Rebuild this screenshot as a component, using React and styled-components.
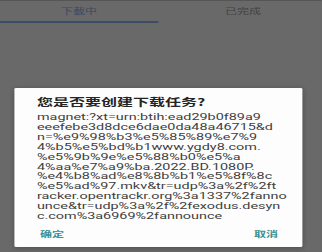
import React from "react"
import styled, { createGlobalStyle } from "styled-components"

// the capture is stretched sideways, so the whole screen is laid out narrow and widened once
const STRETCH = 1.6

const GlobalStyle = createGlobalStyle`
  html, body {
    margin: 0;
    padding: 0;
    width: 322px;
    height: 252px;
    overflow: hidden;
    background: #696969;
  }
`

const Screen = styled.div`
  width: ${322 / STRETCH}px;
  height: 252px;
  transform: scaleX(${STRETCH});
  transform-origin: 0 0;
  background: #696969;
  display: flex;
  flex-direction: column;
  font-family: Roboto, "Noto Sans CJK SC", sans-serif;
`

const TabBar = styled.div`
  display: flex;
  height: 23px;
  border-top: 1.5px solid #555;
  box-sizing: border-box;
`

const Tab = styled.div`
  position: relative;
  flex: 1;
  display: flex;
  justify-content: center;
  padding-top: 5px;
  padding-right: ${props => (props.active ? "4px" : "0")};
  font-family: "Noto Sans CJK SC", sans-serif;
  font-size: 7.5px;
  line-height: 10px;
  color: ${props => (props.active ? "#384961" : "#424242")};
  &::after {
    content: "";
    display: ${props => (props.active ? "block" : "none")};
    position: absolute;
    left: 0;
    right: 4px;
    bottom: 0;
    height: 1.6px;
    background: #3b4c66;
  }
`

const Dialog = styled.div`
  margin: 65px 0 0 9.4px;
  width: 180px;
  height: 159px;
  box-sizing: border-box;
  background: #fdfdfd;
  border-radius: 1px;
  box-shadow: 0 1px 4px rgba(0, 0, 0, 0.25);
  padding: 8px 0 0 13.7px;
  display: flex;
  flex-direction: column;
`

const Title = styled.div`
  font-family: "Noto Sans CJK SC", sans-serif;
  font-weight: 700;
  font-size: 10px;
  line-height: 12px;
  color: #242424;
`

const Body = styled.div`
  margin-top: 5px;
  font-family: Roboto, sans-serif;
  font-size: 9px;
  line-height: 9.9px;
  color: #404040;
  white-space: pre;
`

const Actions = styled.div`
  display: flex;
  justify-content: space-between;
  margin-top: 7px;
  padding: 0 15.6px 0 1.9px;
`

const Action = styled.div`
  font-family: "Noto Sans CJK SC", sans-serif;
  font-size: 7.5px;
  line-height: 10px;
  font-weight: 700;
  color: #3a9090;
`

const magnetLines = [
  "magnet:?xt=urn:btih:ead29b0f89a9",
  "eeefebe3d8dce6dae0da48a46715&d",
  "n=%e9%98%b3%e5%85%89%e7%9",
  "4%b5%e5%bd%b1www.ygdy8.com.",
  "%e5%9b%9e%e5%88%b0%e5%a",
  "4%aa%e7%a9%ba.2022.BD.1080P.",
  "%e4%b8%ad%e8%8b%b1%e5%8f%8c",
  "%e5%ad%97.mkv&tr=udp%3a%2f%2ft",
  "racker.opentrackr.org%3a1337%2fanno",
  "unce&tr=udp%3a%2f%2fexodus.desyn",
  "c.com%3a6969%2fannounce",
]

const App = () => {
  return (
    <>
      <GlobalStyle />
      <Screen>
        <TabBar>
          <Tab active>下載中</Tab>
          <Tab>已完成</Tab>
        </TabBar>
        <Dialog>
          <Title>您是否要创建下载任务?</Title>
          <Body>
            {magnetLines.map(line => (
              <div key={line}>{line}</div>
            ))}
          </Body>
          <Actions>
            <Action>确定</Action>
            <Action>取消</Action>
          </Actions>
        </Dialog>
      </Screen>
    </>
  )
}

export default App
